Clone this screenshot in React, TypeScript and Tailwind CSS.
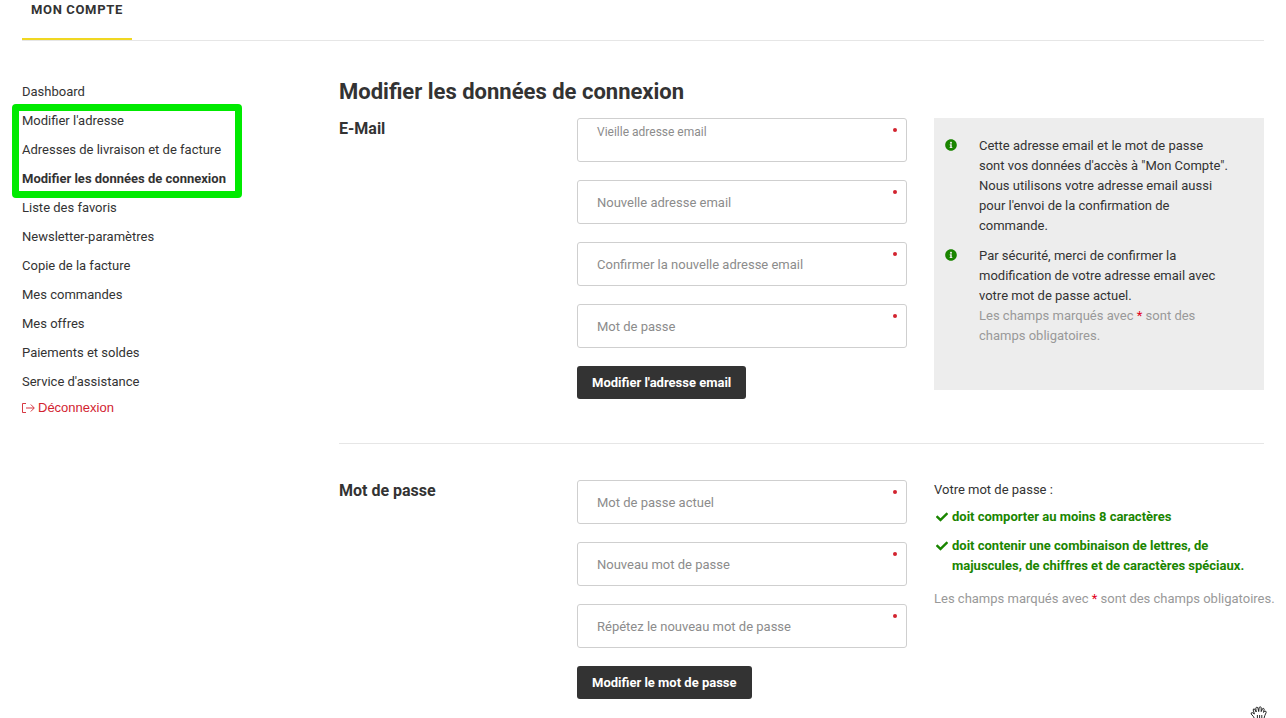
import { useId } from 'react';
import type { ReactNode } from 'react';
import { FaCheck, FaInfoCircle } from 'react-icons/fa';

interface FieldProps {
  label: string;
  type?: string;
  floated?: boolean;
}

const linksAfter = [
  'Liste des favoris',
  'Newsletter-paramètres',
  'Copie de la facture',
  'Mes commandes',
  'Mes offres',
  'Paiements et soldes',
  "Service d'assistance",
];

function Field({ label, type = 'text', floated = false }: FieldProps) {
  const id = useId();

  return (
    <div className="relative">
      <input
        id={id}
        type={type}
        required
        className="block h-11 w-full rounded-[3px] border border-[#cfcfcf] bg-white px-[18px] pt-3 text-[13px] text-[#333] outline-none focus:border-[#333]"
      />
      <label
        htmlFor={id}
        className={`pointer-events-none absolute left-5 text-[#8c8c8c] ${
          floated ? 'top-1 text-[12px] leading-5' : 'top-[13px] text-[13px] leading-5'
        }`}
      >
        {label}
      </label>
      <span className="absolute right-[10px] top-[10px] size-1 rounded-full bg-[#d2232f]" />
    </div>
  );
}

function SubmitButton({ children }: { children: ReactNode }) {
  return (
    <button
      type="submit"
      className="h-[33px] self-start rounded-[3px] bg-[#333] px-[15px] text-[13px] font-bold text-white hover:bg-black"
    >
      {children}
    </button>
  );
}

function NavLink({ children, active = false }: { children: ReactNode; active?: boolean }) {
  return (
    <li>
      <a href="#" className={`block hover:underline ${active ? 'font-bold' : ''}`}>
        {children}
      </a>
    </li>
  );
}

function Star() {
  return <span className="text-[#e2001a]">*</span>;
}

function LogoutIcon() {
  return (
    <svg viewBox="0 0 13 12" className="h-3 w-[13px]" fill="none" stroke="currentColor" strokeWidth="0.9">
      <path d="M4 1.5H.5V10.5H4" />
      <path d="M4 6H12M8.8 2.5L12.3 6L8.8 9.5" />
    </svg>
  );
}

function HandCursor() {
  return (
    <svg viewBox="0 0 18 13" className="h-[13px] w-[18px]" fill="#fff" stroke="#111" strokeWidth="0.9" strokeLinejoin="round">
      <path d="M4.6 14L3.6 11.8L1.2 9Q.8 7.4 2.4 7.6L4.4 9L3.2 5Q3.2 3.4 4.6 4L6.2 7L5.8 3Q6.6 1.4 7.8 2.6L8.7 6.6L9.2 2.4Q10.2 1.2 11.2 2.4L11.2 6.6L12.6 3.6Q13.8 2.8 14.2 4.2L13.5 7.4L14.8 6.2Q16.4 5.8 16.2 7.4L14.8 10.6L13.8 14" />
      <path d="M7.4 10V13M9.6 10V13M11.8 10V13" />
    </svg>
  );
}

export default function App() {
  return (
    <div className="relative min-h-screen overflow-hidden bg-white px-[22px] font-['Roboto',sans-serif] text-[13px] leading-5 text-[#333]">
      <header className="flex border-b border-[#e6e6e6]">
        <a href="#" className="border-b-2 border-[#f0d722] px-[9px] pb-[18px] font-bold tracking-wider">
          MON COMPTE
        </a>
      </header>

      <div className="grid grid-cols-[290fr_925fr] gap-[27px] pt-[35px]">
        <nav className="pt-[6px]">
          <ul className="flex flex-col gap-[9px]">
            <NavLink>Dashboard</NavLink>
            <li className="relative w-fit">
              <ul className="flex flex-col gap-[9px]">
                <NavLink>Modifier l'adresse</NavLink>
                <NavLink>Adresses de livraison et de facture</NavLink>
                <NavLink active>Modifier les données de connexion</NavLink>
              </ul>
              <span className="pointer-events-none absolute -bottom-[9px] -left-[10px] -top-[7px] w-[230px] rounded-[4px] border-[7px] border-[#00ea00]" />
            </li>
            {linksAfter.map((label) => (
              <NavLink key={label}>{label}</NavLink>
            ))}
          </ul>
          <a
            href="#"
            className="mt-[6px] flex items-center gap-[3px] font-['Liberation_Sans',sans-serif] text-[13px] text-[#d2232f]"
          >
            <LogoutIcon />
            Déconnexion
          </a>
        </nav>

        <main>
          <h1 className="mb-[10px] text-[22px] font-bold leading-8">Modifier les données de connexion</h1>

          {/* Email */}
          <form className="grid grid-cols-[211fr_330fr_330fr] gap-[27px]" onSubmit={(e) => e.preventDefault()}>
            <h2 className="text-[16px] font-bold leading-[22px]">E-Mail</h2>
            <div className="flex flex-col gap-[18px]">
              <Field label="Vieille adresse email" type="email" floated />
              <Field label="Nouvelle adresse email" type="email" />
              <Field label="Confirmer la nouvelle adresse email" type="email" />
              <Field label="Mot de passe" type="password" />
              <SubmitButton>Modifier l'adresse email</SubmitButton>
            </div>
            <ul className="mb-[9px] flex flex-col gap-[10px] bg-[#ededed] py-[18px] pl-[11px] pr-[34px]">
              <li className="flex gap-[22px]">
                <FaInfoCircle className="mt-[3px] size-3 shrink-0 text-[#1a8500]" />
                <p>
                  Cette adresse email et le mot de passe sont vos données d'accès à "Mon Compte". Nous utilisons
                  votre adresse email aussi pour l'envoi de la confirmation de commande.
                </p>
              </li>
              <li className="flex gap-[22px]">
                <FaInfoCircle className="mt-[3px] size-3 shrink-0 text-[#1a8500]" />
                <div>
                  <p>Par sécurité, merci de confirmer la modification de votre adresse email avec votre mot de passe actuel.</p>
                  <p className="text-[#999]">
                    Les champs marqués avec <Star /> sont des champs obligatoires.
                  </p>
                </div>
              </li>
            </ul>
          </form>

          <hr className="mb-9 mt-11 border-[#e6e6e6]" />

          {/* Password */}
          <form className="grid grid-cols-[211fr_330fr_330fr] gap-[27px]" onSubmit={(e) => e.preventDefault()}>
            <h2 className="text-[16px] font-bold leading-[22px]">Mot de passe</h2>
            <div className="flex flex-col gap-[18px]">
              <Field label="Mot de passe actuel" type="password" />
              <Field label="Nouveau mot de passe" type="password" />
              <Field label="Répétez le nouveau mot de passe" type="password" />
              <SubmitButton>Modifier le mot de passe</SubmitButton>
            </div>
            <div className="min-w-0">
              <p>Votre mot de passe :</p>
              <ul className="mb-[13px] mt-[7px] flex flex-col gap-[9px] font-bold text-[#1a8500]">
                <li className="flex gap-1 pl-[2px]">
                  <FaCheck className="mt-1 size-3 shrink-0" />
                  doit comporter au moins 8 caractères
                </li>
                <li className="flex gap-1 pl-[2px]">
                  <FaCheck className="mt-1 size-3 shrink-0" />
                  doit contenir une combinaison de lettres, de majuscules, de chiffres et de caractères spéciaux.
                </li>
              </ul>
              <p className="whitespace-nowrap text-[#999]">
                Les champs marqués avec <Star /> sont des champs obligatoires.
              </p>
            </div>
          </form>
        </main>
      </div>

      <div className="absolute bottom-0 right-[18px]">
        <HandCursor />
      </div>
    </div>
  );
}
